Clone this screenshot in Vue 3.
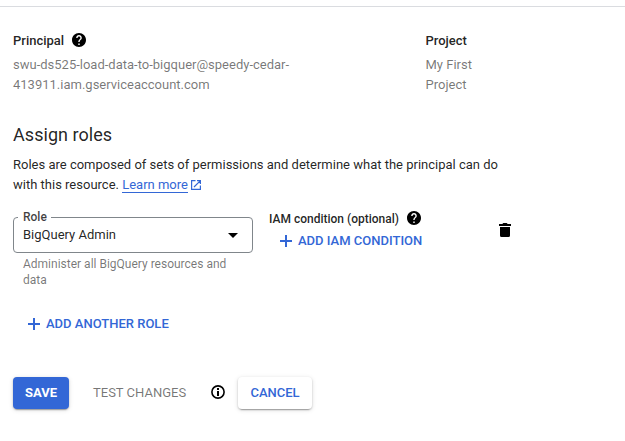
<script setup>
import { ref } from 'vue'

const principal = ['swu-ds525-load-data-to-bigquer@speedy-cedar-', '413911.iam.gserviceaccount.com']
const project = ['My First', 'Project']
const role = ref('BigQuery Admin')

const helpPath =
  'M12 2C6.48 2 2 6.48 2 12s4.48 10 10 10 10-4.48 10-10S17.52 2 12 2zm1 17h-2v-2h2v2zm2.07-7.75l-.9.92C13.45 12.9 13 13.5 13 15h-2v-.5c0-1.1.45-2.1 1.17-2.83l1.24-1.26c.37-.36.59-.86.59-1.41 0-1.1-.9-2-2-2s-2 .9-2 2H8c0-2.21 1.79-4 4-4s4 1.79 4 4c0 .88-.36 1.68-.93 2.25z'
</script>

<template>
  <main class="panel">
    <section class="summary">
      <div class="principal">
        <h3 class="label">
          <span class="t-principal">Principal</span>
          <svg class="help" viewBox="2 2 20 20"><path :d="helpPath" /></svg>
        </h3>
        <div v-for="line in principal" :key="line" class="value">{{ line }}</div>
      </div>
      <div class="project">
        <h3 class="label">Project</h3>
        <div v-for="line in project" :key="line" class="value">{{ line }}</div>
      </div>
    </section>

    <h2 class="heading">Assign roles</h2>
    <p class="intro">
      Roles are composed of sets of permissions and determine what the principal can do<br />
      with this resource.
      <a class="learn"><span>Learn more</span><svg class="external" viewBox="0 0 10 10"><path d="M4.5 .6H.6V9.4H9.4V5.5M6 .6H9.4V4M9.2 .8L3 7" /></svg></a>
    </p>

    <section class="role-row">
      <div class="role-field">
        <div class="select">
          <span class="floating">Role</span>
          <span class="selected">{{ role }}</span>
          <svg class="arrow" viewBox="0 0 10 5"><path d="M0 0H10L5 5Z" /></svg>
        </div>
        <div class="hint">Administer all BigQuery resources and<br />data</div>
      </div>
      <div class="condition">
        <div class="condition-label">
          <span>IAM condition (optional)</span>
          <svg class="help" viewBox="2 2 20 20"><path :d="helpPath" /></svg>
        </div>
        <button class="text-button add-condition">
          <svg class="plus" viewBox="0 0 12 12"><path d="M5 0H7V5H12V7H7V12H5V7H0V5H5Z" /></svg>
          <span>ADD IAM CONDITION</span>
        </button>
      </div>
      <svg class="trash" viewBox="0 0 12 14"><path d="M0 1H3.3L4.3 0H7.7L8.7 1H12V3H0ZM1 4H11V12.5Q11 14 9.5 14H2.5Q1 14 1 12.5Z" /></svg>
    </section>

    <button class="text-button add-role">
      <svg class="plus" viewBox="0 0 12 12"><path d="M5 0H7V5H12V7H7V12H5V7H0V5H5Z" /></svg>
      <span>ADD ANOTHER ROLE</span>
    </button>

    <footer class="actions">
      <button class="button save">SAVE</button>
      <span class="test">TEST CHANGES</span>
      <svg class="info" viewBox="0 0 14 14">
        <circle cx="7" cy="7" r="6.1" />
        <path d="M6 3H8V5H6ZM6 6H8V11H6Z" />
      </svg>
      <button class="button cancel">CANCEL</button>
    </footer>
  </main>
</template>

<style>
body {
  background: #fff;
}
</style>

<style scoped>
.panel {
  box-sizing: border-box;
  width: 625px;
  height: 441px;
  margin: 0;
  padding: 6px 0 0;
  overflow: hidden;
  background: #fff;
  color: rgba(0, 0, 0, 0.87);
  font: 400 13px/20px Roboto, sans-serif;
}
svg {
  display: block;
  flex: none;
}
.summary {
  display: flex;
  border-top: 1px solid #dadce0;
  padding: 24px 0 0 13px;
}
.principal {
  width: 412.5px;
}
.label {
  display: flex;
  align-items: center;
  height: 20px;
  margin: 0 0 4px;
  font-size: 13px;
  font-weight: 500;
  color: rgba(0, 0, 0, 0.87);
}
.t-principal {
  width: 51px;
}
.help {
  width: 14px;
  height: 14px;
  margin: -2px 0 0 8px;
  fill: #000;
}
.value {
  color: rgba(0, 0, 0, 0.54);
}
.heading {
  margin: 28px 0 8px 13px;
  font-size: 18px;
  font-weight: 400;
  line-height: 24px;
  letter-spacing: 0.05px;
}
.intro {
  margin: 0 0 22px 13px;
  white-space: nowrap;
}
.learn {
  color: #3367d6;
}
.learn span {
  display: inline-block;
  line-height: 15px;
  border-bottom: 1px solid #3367d6;
}
.external {
  display: inline-block;
  width: 10px;
  height: 10px;
  margin-left: 3px;
  vertical-align: -1px;
  fill: none;
  stroke: #3367d6;
  stroke-width: 1.2;
}
.role-row {
  display: flex;
  align-items: flex-start;
  padding-left: 13px;
}
.role-field {
  width: 240px;
}
.select {
  position: relative;
  display: flex;
  align-items: center;
  justify-content: space-between;
  box-sizing: border-box;
  height: 36px;
  padding: 0 14px 0 9px;
  border: 1px solid #80868b;
  border-radius: 4px;
}
.floating {
  position: absolute;
  top: -9px;
  left: 4px;
  padding: 0 4px 0 5px;
  background: #fff;
  font-size: 12px;
  font-weight: 500;
  line-height: 16px;
  color: rgba(0, 0, 0, 0.75);
}
.arrow {
  width: 10px;
  height: 5px;
  fill: #000;
}
.hint {
  margin: 3px 0 0 10px;
  font-size: 12px;
  line-height: 16px;
  color: rgba(0, 0, 0, 0.54);
}
.condition {
  width: 230px;
  margin-left: 16px;
}
.condition-label {
  display: flex;
  align-items: center;
  height: 16px;
  margin-top: -6px;
  font-size: 12px;
  font-weight: 500;
}
.text-button {
  display: flex;
  align-items: center;
  height: 20px;
  padding: 0;
  border: 0;
  background: none;
  color: #3367d6;
  font: 500 13px/20px Roboto, sans-serif;
  white-space: nowrap;
}
.plus {
  width: 12px;
  height: 12px;
  margin-right: 6px;
  fill: #3367d6;
}
.add-condition {
  margin: 4px 0 0 11px;
}
.trash {
  width: 12px;
  height: 14px;
  margin-top: 6px;
  fill: #000;
}
.add-role {
  margin: 26px 0 43px 28px;
}
.actions {
  display: flex;
  align-items: center;
  height: 32px;
  padding-left: 13px;
}
.button {
  box-sizing: border-box;
  height: 32px;
  padding: 0;
  border: 0;
  border-radius: 4px;
  font: 500 13px/32px Roboto, sans-serif;
  box-shadow: 0 3px 1px -2px rgba(0, 0, 0, 0.2), 0 1px 2px rgba(0, 0, 0, 0.2), 0 1px 5px rgba(0, 0, 0, 0.12);
}
.save {
  width: 56px;
  background: #3367d6;
  color: #fff;
  font-weight: 700;
}
.test {
  width: 94px;
  margin-left: 24px;
  color: rgba(0, 0, 0, 0.54);
  white-space: nowrap;
}
.info {
  width: 14px;
  height: 14px;
  margin: -2px 0 0 24px;
  fill: #000;
}
.info circle {
  fill: none;
  stroke: #000;
  stroke-width: 1.6;
}
.cancel {
  width: 74px;
  margin-left: 13px;
  background: #fff;
  color: #3367d6;
}
</style>
